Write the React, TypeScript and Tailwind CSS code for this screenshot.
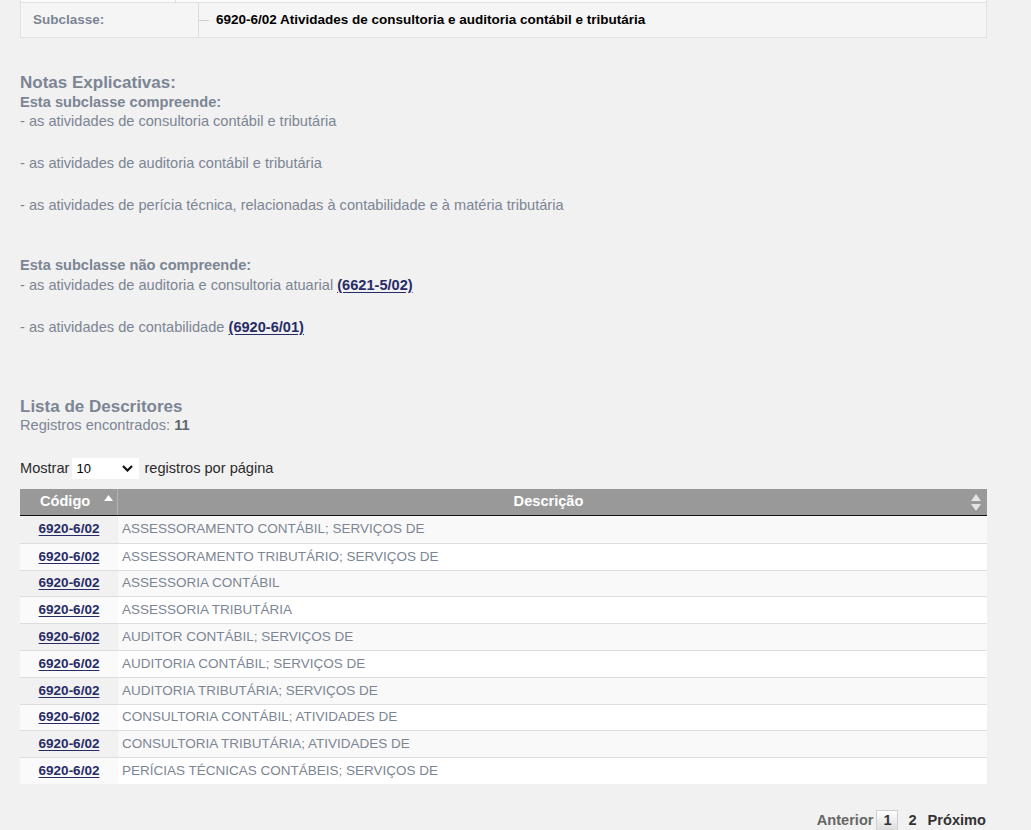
const descritores = [
  "ASSESSORAMENTO CONTÁBIL; SERVIÇOS DE",
  "ASSESSORAMENTO TRIBUTÁRIO; SERVIÇOS DE",
  "ASSESSORIA CONTÁBIL",
  "ASSESSORIA TRIBUTÁRIA",
  "AUDITOR CONTÁBIL; SERVIÇOS DE",
  "AUDITORIA CONTÁBIL; SERVIÇOS DE",
  "AUDITORIA TRIBUTÁRIA; SERVIÇOS DE",
  "CONSULTORIA CONTÁBIL; ATIVIDADES DE",
  "CONSULTORIA TRIBUTÁRIA; ATIVIDADES DE",
  "PERÍCIAS TÉCNICAS CONTÁBEIS; SERVIÇOS DE",
]

const CodeLink = ({ code }: { code: string }) => (
  <a href="#" className="font-bold text-[#272b66] underline underline-offset-2">
    {code}
  </a>
)

const SortAsc = () => (
  <svg width="9" height="6" viewBox="0 0 9 6" className="ml-[14px] -mt-[9px]">
    <path d="M4.5 0L9 6H0z" fill="#ffffff" />
  </svg>
)

const SortBoth = () => (
  <svg width="10" height="17" viewBox="0 0 10 17" className="mr-[6px]">
    <path d="M5 0L10 7H0z" fill="#e4e4e4" />
    <path d="M5 17L10 10H0z" fill="#e4e4e4" />
  </svg>
)

export default function App() {
  return (
    <div className="min-h-screen bg-[#f1f1f1] font-['Liberation_Sans',Arial,sans-serif] pb-[20px]">
      <div className="w-[1007px] px-[20px]">
        {/* Subclass summary table (scrolled, top row cut off) */}
        <div className="border-x border-b border-[#e1e1e1]">
          <div className="flex h-[2px] bg-[#fbfbfb]">
            <div className="w-[155px] border-r border-[#e1e1e1]" />
          </div>
          <div className="flex h-[35px] border-t border-[#e1e1e1] bg-[#f5f5f5]">
            <div className="flex w-[177px] items-center pl-[12px] text-[13.5px] font-bold text-[#7c8594]">
              Subclasse:
            </div>
            <div className="flex flex-1 items-center border-l border-[#dcdcdc]">
              <span className="h-px w-[10px] bg-[#cdcdcd]" />
              <span className="ml-[7px] text-[13.5px] font-bold text-black">
                6920-6/02 Atividades de consultoria e auditoria contábil e tributária
              </span>
            </div>
          </div>
        </div>

        {/* Notas explicativas */}
        <div className="mt-[35px] text-[14.6px] leading-[19px] text-[#7c8594]">
          <h3 className="text-[17px] font-bold leading-[20px]">Notas Explicativas:</h3>
          <p className="font-bold">Esta subclasse compreende:</p>
          <p>- as atividades de consultoria contábil e tributária</p>
          <p className="mt-[23px]">- as atividades de auditoria contábil e tributária</p>
          <p className="mt-[23px]">
            - as atividades de perícia técnica, relacionadas à contabilidade e à matéria tributária
          </p>
          <p className="mt-[41px] font-bold">Esta subclasse não compreende:</p>
          <p className="mt-px">
            - as atividades de auditoria e consultoria atuarial <CodeLink code="(6621-5/02)" />
          </p>
          <p className="mt-[23px]">
            - as atividades de contabilidade <CodeLink code="(6920-6/01)" />
          </p>
        </div>

        {/* Lista de descritores */}
        <div className="mt-[60px] text-[14.6px] leading-[19px] text-[#7c8594]">
          <h3 className="text-[17px] font-bold">Lista de Descritores</h3>
          <p>
            Registros encontrados: <b className="text-[#5f6670]">11</b>
          </p>
        </div>

        <div className="mt-[23px] flex h-[21px] items-center text-[14.6px] text-[#2b2b2b]">
          <span>Mostrar</span>
          <div className="ml-[3px] flex h-[21px] w-[67px] items-center justify-between bg-white pl-[4px] pr-[6px] text-[13px] text-black">
            <span>10</span>
            <svg width="11" height="7" viewBox="0 0 11 7">
              <path d="M1 1l4.5 4.5L10 1" fill="none" stroke="#111" strokeWidth="2.2" />
            </svg>
          </div>
          <span className="ml-[5px]">registros por página</span>
        </div>

        <div className="mt-[10px]">
          <div className="flex h-[27px] border-b border-[#111] bg-[#999999] text-[14.6px] font-bold text-white">
            <div className="flex w-[98px] items-center border-r border-[#b3b3b3] pl-[20px]">
              <span>Código</span>
              <SortAsc />
            </div>
            <div className="flex flex-1 items-center">
              <span className="flex-1 pl-[8px] text-center">Descrição</span>
              <SortBoth />
            </div>
          </div>

          {descritores.map((d, i) => (
            <div
              key={d}
              className={`flex h-[26.8px] text-[13.5px] ${i > 0 ? "border-t border-[#dddddd]" : ""} ${
                i % 2 === 0 ? "bg-[#f9f9f9]" : "bg-white"
              }`}
            >
              <div
                className={`flex w-[98px] items-center justify-center ${
                  i % 2 === 0 ? "bg-[#f1f1f1]" : "bg-[#fafafa]"
                }`}
              >
                <CodeLink code="6920-6/02" />
              </div>
              <div className="flex flex-1 items-center pl-[4px] text-[#7c8594]">{d}</div>
            </div>
          ))}
        </div>

        {/* Paginação */}
        <div className="mt-[26px] flex items-center justify-end pr-[1px] text-[14.6px] font-bold text-[#333333]">
          <span className="text-[#666666]">Anterior</span>
          <span className="ml-[3px] flex h-[21px] w-[22px] items-center justify-center border border-[#cfcfcf] bg-gradient-to-b from-white to-[#dcdcdc]">
            1
          </span>
          <span className="ml-[10px]">2</span>
          <span className="ml-[11px]">Próximo</span>
        </div>
      </div>
    </div>
  )
}
